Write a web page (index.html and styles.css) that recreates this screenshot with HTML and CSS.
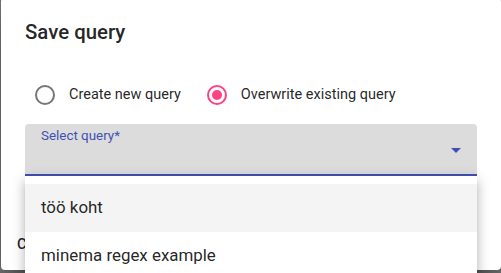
FILE: index.html
```html
<!DOCTYPE html>
<html>
<head>
<meta charset="utf-8">
<link rel="stylesheet" href="styles.css">
</head>
<body>
<div class="dialog">
  <h2 class="title">Save query</h2>
  <div class="options">
    <label class="radio">
      <span class="circle"></span>
      <span class="radio-label">Create new query</span>
    </label>
    <label class="radio checked">
      <span class="circle"><span class="dot"></span></span>
      <span class="radio-label">Overwrite existing query</span>
    </label>
  </div>
  <div class="select-wrap">
    <div class="field">
      <span class="field-label">Select query*</span>
      <span class="arrow"></span>
    </div>
    <div class="menu">
      <div class="item active">töö koht</div>
      <div class="item">minema regex example</div>
    </div>
  </div>
  <div class="actions">
    <button class="btn">CANCEL</button>
  </div>
</div>
</body>
</html>
```

FILE: styles.css
```css
html, body {
  margin: 0;
  padding: 0;
}
body {
  background: #777777;
  width: 501px;
  height: 273px;
  overflow: hidden;
  font-family: Roboto, "Liberation Sans", sans-serif;
  color: rgba(0, 0, 0, 0.87);
}
.dialog {
  margin-left: 1px;
  margin-top: -2px;
  width: 500px;
  height: 272px;
  box-sizing: border-box;
  padding: 18px 24px 0 24px;
  background: #fff;
  border-radius: 4px;
  display: flex;
  flex-direction: column;
  box-shadow: 0 11px 15px -7px rgba(0,0,0,.2), 0 24px 38px 3px rgba(0,0,0,.14), 0 9px 46px 8px rgba(0,0,0,.12);
}
.title {
  margin: 0;
  font-size: 20.4px;
  line-height: 32px;
  font-weight: 500;
  height: 32px;
}
.options {
  margin-top: 27px;
  height: 40px;
  display: flex;
  align-items: center;
  gap: 16px;
}
.radio {
  display: flex;
  align-items: center;
  height: 40px;
  font-size: 14.5px;
}
.circle {
  width: 20px;
  height: 20px;
  box-sizing: border-box;
  margin: 10px;
  border: 2px solid rgba(0, 0, 0, 0.54);
  border-radius: 50%;
  display: flex;
  align-items: center;
  justify-content: center;
}
.checked .circle {
  border-color: #ff4081;
}
.dot {
  width: 10px;
  height: 10px;
  border-radius: 50%;
  background: #ff4081;
}
.radio-label {
  padding-left: 4px;
  padding-bottom: 2px;
}
.select-wrap {
  margin-top: 9px;
  position: relative;
}
.field {
  height: 52px;
  box-sizing: border-box;
  background: #dcdcdc;
  border-radius: 4px 4px 0 0;
  border-bottom: 2px solid #3f51b5;
  padding: 4px 16px 0 16px;
  display: flex;
  align-items: flex-start;
}
.field-label {
  font-size: 13.4px;
  line-height: 16px;
  color: #3f51b5;
  flex: 1;
}
.arrow {
  width: 0;
  height: 0;
  border-left: 5px solid transparent;
  border-right: 5px solid transparent;
  border-top: 5px solid #3f51b5;
  margin-top: 20px;
}
.menu {
  position: absolute;
  left: 0;
  right: 0;
  top: 52px;
  background: #fff;
  padding-top: 8px;
  border-radius: 0 0 4px 4px;
  z-index: 2;
  box-shadow: 0 5px 5px -3px rgba(0,0,0,.2), 0 8px 10px 1px rgba(0,0,0,.14), 0 3px 14px 2px rgba(0,0,0,.12);
}
.item {
  height: 48px;
  line-height: 47px;
  padding: 0 16px;
  font-size: 16.9px;
}
.item.active {
  background: #f4f4f4;
}
.actions {
  margin-top: auto;
  margin-left: -16px;
  padding: 8px 0;
  height: 52px;
  box-sizing: border-box;
  display: flex;
  align-items: center;
}
.btn {
  font-family: Roboto, "Liberation Sans", sans-serif;
  font-size: 14.5px;
  font-weight: 500;
  letter-spacing: 0.5px;
  background: transparent;
  border: 0;
  padding: 0 8px;
  height: 36px;
  color: rgba(0, 0, 0, 0.87);
}
```
